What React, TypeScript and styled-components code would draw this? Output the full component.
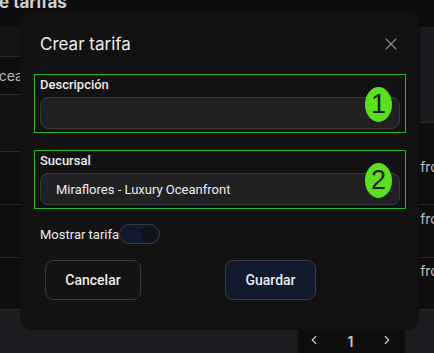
import styled, { createGlobalStyle } from "styled-components";
import { X, ChevronLeft, ChevronRight } from "lucide-react";

const GlobalStyle = createGlobalStyle`
	html, body {
		margin: 0;
		padding: 0;
		background: #0d0d0d;
		font-family: Roboto, "Noto Sans", sans-serif;
		overflow: hidden;
	}
`;

const Page = styled.div`
	position: relative;
	width: 434px;
	height: 353px;
	overflow: hidden;
	display: flex;
	flex-direction: column;
	background: #0d0d0d;
`;

const TopBar = styled.div`
	height: 27px;
	flex: none;
	overflow: hidden;

	h2 {
		margin: -8px 0 0 -1px;
		font-family: Inter, sans-serif;
		font-size: 17px;
		line-height: 20px;
		font-weight: 700;
		color: #cfcfcf;
	}
`;

const Table = styled.div`
	display: flex;
	justify-content: space-between;
	height: 283px;
	flex: none;
`;

const Column = styled.div<{ $w: number }>`
	width: ${(p) => p.$w}px;
	display: flex;
	flex-direction: column;
	overflow: hidden;
`;

const Cell = styled.div<{ $h: number; $bg?: string; $pad?: number }>`
	box-sizing: border-box;
	height: ${(p) => p.$h}px;
	flex: none;
	background: ${(p) => p.$bg ?? "#0e0e0e"};
	border-bottom: 1px solid #2a2a2a;
	padding-top: ${(p) => p.$pad ?? 0}px;
	font-family: Inter, sans-serif;
	font-size: 14px;
	line-height: 18px;
	color: #bdbdbd;
	white-space: nowrap;
`;

const Clip = styled.span<{ $shift: number }>`
	display: inline-block;
	margin-left: ${(p) => p.$shift}px;
`;

const Footer = styled.div`
	flex: 1;
	background: #1b1c1f;
	display: flex;
	justify-content: flex-end;
	align-items: flex-end;
	padding-right: 29px;
`;

const Pager = styled.div`
	width: 107px;
	height: 28px;
	background: #0e0e0e;
	display: flex;
	align-items: center;
	justify-content: space-between;
	padding: 0 11px 0 9px;
	box-sizing: border-box;
	color: #c8c8c8;
	font-family: Inter, sans-serif;
	font-size: 14px;
	font-weight: 600;

	span {
		padding-top: 4px;
	}
	svg {
		margin-top: 2px;
	}
`;

const Modal = styled.div`
	position: absolute;
	left: 20px;
	top: 12px;
	width: 399px;
	height: 318px;
	box-sizing: border-box;
	background: #121212;
	border-radius: 12px;
	padding: 20px 20px 0 14px;
	display: flex;
	flex-direction: column;
`;

const TitleRow = styled.div`
	display: flex;
	align-items: center;
	justify-content: space-between;
	height: 24px;
	padding-left: 6px;
	margin-bottom: 18px;

	h3 {
		margin: 0;
		font-family: Inter, sans-serif;
		font-size: 17px;
		font-weight: 400;
		color: #ececec;
	}

	svg {
		color: #8a8a8a;
		margin-right: -2px;
	}
`;

const Field = styled.div`
	position: relative;
	border: 1px solid #1fb82a;
	padding: 1px 5px 3px 5px;
	display: flex;
	flex-direction: column;
	width: 372px;
	box-sizing: border-box;
	& + & {
		margin-top: 17px;
	}
`;

const Label = styled.label`
	font-size: 13px;
	line-height: 18px;
	font-weight: 500;
	color: #ececec;
	margin-bottom: 3px;
`;

const Input = styled.div`
	height: 32px;
	box-sizing: border-box;
	background: #212124;
	border: 1px solid #38383b;
	border-radius: 8px;
	display: flex;
	align-items: center;
	padding-left: 15px;
	font-size: 13px;
	font-weight: 400;
	color: #ececec;
`;

const Marker = styled.div<{ $top: number }>`
	position: absolute;
	right: 13px;
	top: ${(p) => p.$top}px;
	width: 27px;
	height: 35px;
	border-radius: 50%;
	background: #5be01d;
	color: #1c1c1c;
	font-family: "Liberation Sans", Arial, sans-serif;
	font-size: 27px;
	display: flex;
	align-items: center;
	justify-content: center;
`;

const ToggleRow = styled.div`
	display: flex;
	align-items: center;
	margin-top: 15px;
	padding-left: 6px;
	font-size: 13px;
	font-weight: 400;
	color: #ececec;
`;

const Switch = styled.div`
	width: 41px;
	height: 20px;
	box-sizing: border-box;
	border: 1px solid #3a3a3c;
	border-radius: 10px;
	background: #0f1a2e;
	display: flex;
	align-items: center;
	justify-content: flex-end;
	padding-right: 2px;

	&::after {
		content: "";
		width: 16px;
		height: 16px;
		border-radius: 50%;
		background: #111214;
	}
`;

const Actions = styled.div`
	display: flex;
	gap: 84px;
	margin-top: 16px;
	padding-left: 11px;
`;

const Button = styled.button<{ $primary?: boolean }>`
	height: 40px;
	width: ${(p) => (p.$primary ? 91 : 96)}px;
	border-radius: 8px;
	border: 1px solid #3a3a3c;
	background: ${(p) => (p.$primary ? "#0f1a2d" : "transparent")};
	color: #ececec;
	font-family: Roboto, sans-serif;
	font-size: 14px;
	font-weight: 500;
`;

export default function App() {
	return (
		<>
			<GlobalStyle />
			<Page>
				<TopBar>
					<h2>e tarifas</h2>
				</TopBar>
				<Table>
					<Column $w={20}>
						<Cell $h={30} $bg="#161616" />
						<Cell $h={38} $pad={10}>
							<Clip $shift={-12}>Oceanfront</Clip>
						</Cell>
						<Cell $h={57} $bg="#131313" />
						<Cell $h={53} />
						<Cell $h={53} />
						<Cell $h={52} />
					</Column>
					<Column $w={14}>
						<Cell $h={96} $bg="#1a1b1e" />
						<Cell $h={82} $pad={35}>
							<Clip $shift={-16}>anfront</Clip>
						</Cell>
						<Cell $h={53} $pad={5}>
							<Clip $shift={-16}>anfront</Clip>
						</Cell>
						<Cell $h={52} $pad={4}>
							<Clip $shift={-16}>anfront</Clip>
						</Cell>
					</Column>
				</Table>
				<Footer>
					<Pager>
						<ChevronLeft size={14} strokeWidth={2} />
						<span>1</span>
						<ChevronRight size={14} strokeWidth={2} />
					</Pager>
				</Footer>

				<Modal>
					<TitleRow>
						<h3>Crear tarifa</h3>
						<X size={20} strokeWidth={1.4} />
					</TitleRow>
					<Field>
						<Label>Descripción</Label>
						<Input />
						<Marker $top={12}>1</Marker>
					</Field>
					<Field>
						<Label>Sucursal</Label>
						<Input>Miraflores - Luxury Oceanfront</Input>
						<Marker $top={12}>2</Marker>
					</Field>
					<ToggleRow>
						Mostrar tarifa
						<Switch />
					</ToggleRow>
					<Actions>
						<Button>Cancelar</Button>
						<Button $primary>Guardar</Button>
					</Actions>
				</Modal>
			</Page>
		</>
	);
}
